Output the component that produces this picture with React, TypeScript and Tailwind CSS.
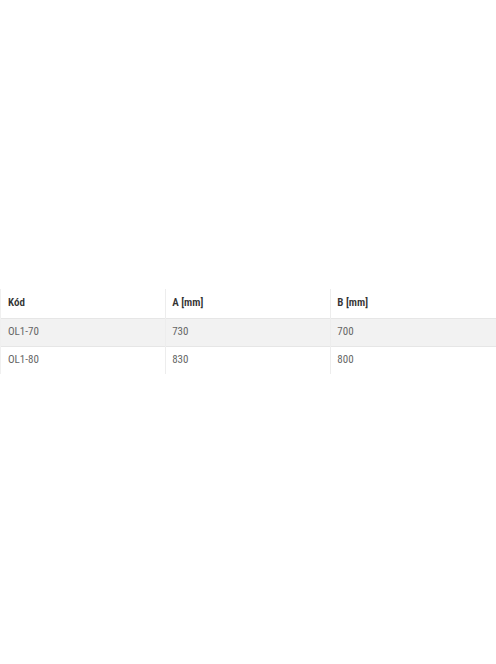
const rows = [
  { kod: "OL1-70", a: "730", b: "700" },
  { kod: "OL1-80", a: "830", b: "800" },
];

export default function App() {
  return (
    <div className="h-[664px] w-[496px] bg-white pt-[289px] font-['Roboto_Condensed','Liberation_Sans_Narrow',Roboto,sans-serif] font-stretch-condensed">
      <table className="w-full table-fixed border-collapse text-[11px]">
        <thead>
          <tr className="h-[29px] border-b border-[#e6e6e6] bg-white">
            <th className="border-l border-[#f0f0f0] px-[7px] text-left font-semibold text-[#333]">Kód</th>
            <th className="border-l border-[#ededed] px-[6px] text-left font-semibold text-[#333]">A [mm]</th>
            <th className="border-l border-[#ededed] px-[6px] text-left font-semibold text-[#333]">B [mm]</th>
          </tr>
        </thead>
        <tbody>
          {rows.map((r, i) => (
            <tr
              key={r.kod}
              className={`h-[28px] ${i === 0 ? "border-b border-[#e6e6e6] bg-[#f2f2f2]" : "bg-white"}`}
            >
              <td className="border-l border-[#f0f0f0] px-[7px] text-[#666]">{r.kod}</td>
              <td className="border-l border-[#ededed] px-[6px] text-[#666]">{r.a}</td>
              <td className="border-l border-[#ededed] px-[6px] text-[#666]">{r.b}</td>
            </tr>
          ))}
        </tbody>
      </table>
    </div>
  );
}
